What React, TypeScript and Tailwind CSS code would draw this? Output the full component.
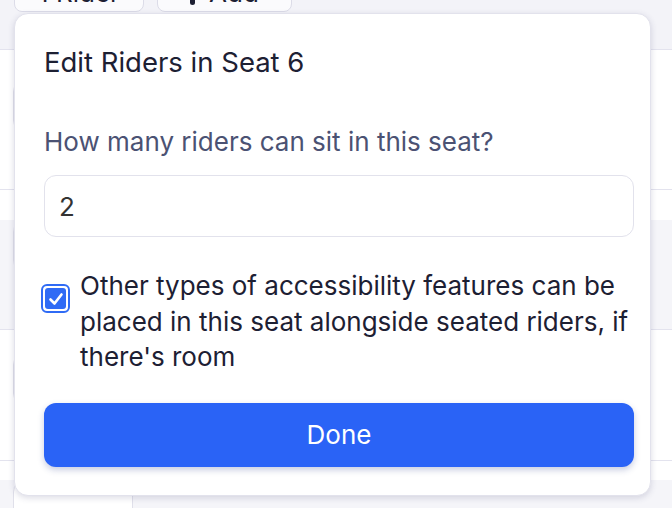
import React from "react";

export default function App() {
  const rows = [
    { h: "h-[110px]", bg: "bg-white", boxTop: "mt-[30px]" },
    { h: "h-[110px]", bg: "bg-[#f5f5f9]", boxTop: "mt-[30px]" },
    { h: "h-[108px]", bg: "bg-white", boxTop: "mt-[23px]" },
    { h: "h-[110px]", bg: "bg-[#f5f5f9]", boxTop: "mt-[19px]" },
  ];
  return (
    <div
      className="relative w-[672px] h-[508px] overflow-hidden bg-white"
      style={{ fontFamily: "Inter, 'Noto Sans', sans-serif" }}
    >
      {/* background page */}
      <div className="h-[50px] bg-[#f3f3f8] border-b border-[#e3e3ee] flex gap-[13px] pl-[14px]">
        <div className="-mt-[28px] h-[40px] w-[130px] rounded-[8px] border border-[#dcdce8] bg-[#fbfbfd] flex items-end justify-center pb-[6px] text-[26px] leading-[24px] text-[#1d2033]">
          1 Rider
        </div>
        <div className="-mt-[28px] h-[40px] w-[135px] rounded-[8px] border border-[#dcdce8] bg-[#fbfbfd] flex items-end justify-center gap-[14px] pb-[6px] text-[26px] leading-[24px] text-[#1d2033]">
          <span className="w-[5px] h-[24px] bg-[#1d2033] rounded-full" />
          <span>Add</span>
        </div>
      </div>
      {rows.map((r, i) => (
        <div key={i} className={`${r.h} ${r.bg} border-b border-[#e3e3ee] pl-[13px]`}>
          <div className={`${r.boxTop} h-[52px] w-[120px] rounded-[12px] border border-[#e0e0ea] bg-white`} />
        </div>
      ))}

      {/* modal */}
      <div className="absolute left-[14px] top-[13px] w-[637px] h-[483px] rounded-[14px] bg-white border border-[#e2e2ec] shadow-[0_2px_6px_rgba(60,60,110,0.18)] pl-[29px] pr-[16px] pt-[30px] flex flex-col">
        <div className="text-[27.5px] leading-[36px] text-[#1d2033]">Edit Riders in Seat 6</div>
        <div className="mt-[44px] text-[26px] leading-[36px] text-[#4b5273]">
          How many riders can sit in this seat?
        </div>
        <div className="mt-[15px] h-[62px] rounded-[12px] border border-[#e2e2ec] flex items-center px-[14px] text-[26px] text-[#333333]">
          2
        </div>
        <div className="mt-[31px] flex items-start">
          <div className="mt-[16px] ml-[-3px] w-[29px] h-[29px] rounded-[6px] border-[2px] border-[#2f6bf5] p-[2px] shrink-0">
            <div className="w-full h-full rounded-[3px] bg-[#2f6bf5] flex items-center justify-center">
              <svg width="18" height="18" viewBox="0 0 18 18" fill="none">
                <path d="M3.5 9.5 L7.5 13.5 L14.5 4.5" stroke="white" strokeWidth="2.6" strokeLinecap="round" strokeLinejoin="round" />
              </svg>
            </div>
          </div>
          <div className="ml-[10px] text-[26px] leading-[35.5px] text-[#1d2033]">
            Other types of accessibility features can be placed in this seat alongside seated riders, if there's room
          </div>
        </div>
        <button className="mt-[28px] h-[64px] rounded-[12px] bg-[#2a63f6] text-white text-[26px] shadow-[0_3px_6px_rgba(40,60,140,0.25)]">
          Done
        </button>
      </div>
    </div>
  );
}
